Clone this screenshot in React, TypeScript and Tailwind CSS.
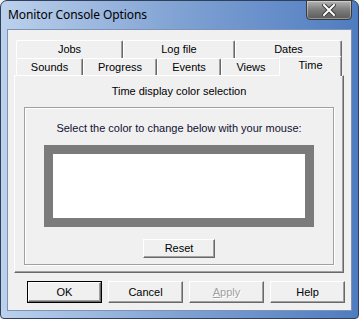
import { useState } from "react";

const font = { fontFamily: '"Liberation Sans", Arial, sans-serif' };

// classic raised tab
const Tab = ({ label, w, selected = false, onClick }: { label: string; w: string; selected?: boolean; onClick?: () => void }) => (
    <div
        onClick={onClick}
        className={`${w} ${selected ? "h-[20px] -mx-[2px] z-10 -mb-[1px] bg-[#f0f0f0]" : "h-[18px]"} flex items-start justify-center pt-[2px] leading-[13px] border-l border-t border-r border-l-white border-t-white border-r-[#696969] rounded-t-[2px] shadow-[inset_-1px_0_0_#a0a0a0] text-[11px] text-black`}
    >
        {label}
    </div>
);

const Btn = ({ children, w, isDefault = false, disabled = false }: { children: React.ReactNode; w: string; isDefault?: boolean; disabled?: boolean }) => (
    <div className={`${w} ${isDefault ? "border border-black" : ""}`}>
        <div className="h-full flex items-center justify-center border border-t-white border-l-white border-r-[#696969] border-b-[#696969] shadow-[inset_-1px_-1px_0_#a0a0a0] bg-[#f0f0f0]">
            {disabled ? (
                <span className="text-[11px] text-[#a0a0a0] [text-shadow:1px_1px_0_#fff]">
                    <span className="underline">A</span>pply
                </span>
            ) : (
                <span className="text-[11px] text-black">{children}</span>
            )}
        </div>
    </div>
);

export default function App() {
    const [tab, setTab] = useState<string>("Time");

    return (
        <div style={font} className="w-[359px] h-[319px] relative overflow-hidden bg-[#f0f0f0]">
            <div className="w-full h-full rounded-t-[7px] rounded-b-[4px] border border-[#2f3f5c] bg-gradient-to-r from-[#bcd1ec] via-[#80a2d3] to-[#4f7cc0] flex flex-col">
                {/* title bar */}
                <div className="h-[28px] flex items-start justify-between shrink-0">
                    <span style={{ fontFamily: '"Noto Sans", sans-serif' }} className="text-[12px] text-black ml-[7px] mt-[5px] tracking-[-0.1px]">
                        Monitor Console Options
                    </span>
                    <div className="w-[46px] h-[20px] mr-[6px] -mt-[1px] rounded-b-[4px] border border-[#3a3a3a] bg-gradient-to-b from-[#b5b5b5] via-[#7c7c7c] to-[#5c5c5c] shadow-[inset_0_0_0_1px_rgba(255,255,255,0.35)] flex items-center justify-center">
                        <svg width="14" height="12" viewBox="0 0 14 12">
                            <path d="M2 1 L12 11 M12 1 L2 11" stroke="#3a3a3a" strokeWidth="4" strokeLinecap="square" />
                            <path d="M2 1 L12 11 M12 1 L2 11" stroke="#ffffff" strokeWidth="2" strokeLinecap="square" />
                        </svg>
                    </div>
                </div>

                {/* client area */}
                <div className="ml-[6px] mr-[6px] h-[282px] bg-[#f0f0f0] border border-[#7e93b3] flex flex-col">
                    <div className="ml-[6px] mt-[10px] w-[330px] flex flex-col">
                        {/* tab rows */}
                        <div className="flex pl-[2px]">
                            <Tab label="Jobs" w="w-[107px]" onClick={() => setTab("Jobs")} />
                            <Tab label="Log file" w="w-[112px]" onClick={() => setTab("Log file")} />
                            <Tab label="Dates" w="w-[107px]" onClick={() => setTab("Dates")} />
                        </div>
                        <div className="flex pl-[2px] items-end h-[17px]">
                            <Tab label="Sounds" w="w-[67px] !h-[17px]" onClick={() => setTab("Sounds")} />
                            <Tab label="Progress" w="w-[74px] !h-[17px]" onClick={() => setTab("Progress")} />
                            <Tab label="Events" w="w-[64px] !h-[17px]" onClick={() => setTab("Events")} />
                            <Tab label="Views" w="w-[60px] !h-[17px]" onClick={() => setTab("Views")} />
                            <Tab label="Time" w="w-[63px]" selected={tab === "Time"} onClick={() => setTab("Time")} />
                        </div>

                        {/* panel */}
                        <div className="h-[198px] border border-t-white border-l-white border-r-[#696969] border-b-[#696969] shadow-[inset_-1px_-1px_0_#a0a0a0] flex flex-col items-center">
                            <p className="text-[11px] text-black mt-[9px] leading-[13px]">Time display color selection</p>
                            <div className="mt-[9px] w-[310px] h-[158px] border border-[#a0a0a0] shadow-[inset_1px_1px_0_#fff,1px_1px_0_#fff] flex flex-col items-center">
                                <p className="text-[11px] text-[#101030] mt-[14px] leading-[13px]">Select the color to change below with your mouse:</p>
                                <div className="mt-[10px] w-[270px] h-[82px] bg-[#7b7b7b] p-[9px]">
                                    <div className="w-full h-full bg-white" />
                                </div>
                                <Btn w="w-[72px] h-[19px] mt-[12px]">Reset</Btn>
                            </div>
                        </div>
                    </div>

                    {/* dialog buttons */}
                    <div className="flex gap-[6px] ml-[19px] mt-[8px]">
                        <Btn w="w-[75px] h-[22px]" isDefault>OK</Btn>
                        <Btn w="w-[75px] h-[22px]">Cancel</Btn>
                        <Btn w="w-[75px] h-[22px]" disabled>Apply</Btn>
                        <Btn w="w-[75px] h-[22px]">Help</Btn>
                    </div>
                </div>
            </div>
        </div>
    );
}
